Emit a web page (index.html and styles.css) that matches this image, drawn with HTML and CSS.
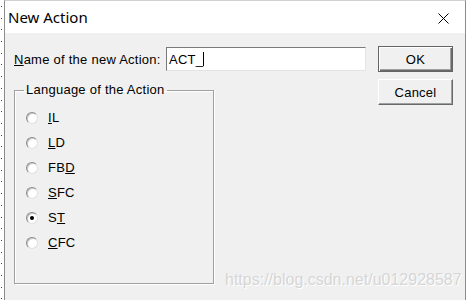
FILE: index.html
```html
<!DOCTYPE html>
<html>
<head>
<meta charset="utf-8">
<link rel="stylesheet" href="styles.css">
</head>
<body>
<div class="desk">
  <div class="window">
    <div class="titlebar">
      <span class="title">New Action</span>
      <svg class="close" width="11" height="11" viewBox="0 0 11 11"><path d="M0.5 0.5 L10.5 10.5 M10.5 0.5 L0.5 10.5" stroke="#000" stroke-width="1" fill="none"/></svg>
    </div>
    <div class="client">
      <div class="main">
        <div class="name-row">
          <label class="name-label"><u>N</u>ame of the new Action:</label>
          <div class="field">ACT_<span class="caret"></span></div>
        </div>
        <fieldset class="group">
          <legend>Language of the Action</legend>
          <div class="opt"><span class="radio"></span><span><u>I</u>L</span></div>
          <div class="opt"><span class="radio"></span><span><u>L</u>D</span></div>
          <div class="opt"><span class="radio"></span><span>FB<u>D</u></span></div>
          <div class="opt"><span class="radio"></span><span><u>S</u>FC</span></div>
          <div class="opt"><span class="radio checked"></span><span>S<u>T</u></span></div>
          <div class="opt"><span class="radio"></span><span><u>C</u>FC</span></div>
        </fieldset>
      </div>
      <div class="buttons">
        <button class="btn default">OK</button>
        <button class="btn">Cancel</button>
      </div>
    </div>
  </div>
  <div class="watermark">https://blog.csdn.net/u012928587</div>
</div>
</body>
</html>
```
FILE: styles.css
```css
html, body {
  margin: 0;
  padding: 0;
  background: #fff;
}
.desk {
  position: relative;
  width: 469px;
  height: 300px;
  overflow: hidden;
  background-color: #fff;
  background-image: linear-gradient(#3a3a3a, #3a3a3a);
  background-size: 1px 2px;
  background-position: 1px 5px;
  background-repeat: repeat-y;
  background-origin: border-box;
}
.desk {
  background-image: repeating-linear-gradient(to bottom, #444 0 1px, transparent 1px 11.7px);
  background-size: 1px 100%;
  background-position: 1px 6px;
  background-repeat: no-repeat;
}
.window {
  margin-left: 4px;
  width: 462px;
  height: 300px;
  box-sizing: border-box;
  border-left: 1px solid #8c8c8c;
  border-right: 1px solid #8c8c8c;
  border-top: 1px solid #d0d0d0;
  background: #f0f0f0;
  font-family: "Liberation Sans", Arial, sans-serif;
  font-size: 13px;
  letter-spacing: 0.25px;
  color: #000;
}
.titlebar {
  height: 32px;
  background: #fff;
  display: flex;
  align-items: center;
  justify-content: space-between;
  padding: 0 16px 0 3px;
}
.title {
  font-family: "Noto Sans", "Open Sans", sans-serif;
  font-size: 15px;
  letter-spacing: 0;
  margin-top: -1px;
}
.close {
  align-self: flex-start;
  margin-top: 12px;
}
.client {
  display: flex;
  padding: 13px 12px 0 9px;
}
.main {
  width: 352px;
}
.name-row {
  display: flex;
  align-items: center;
  margin-top: 1px;
  height: 24px;
}
.name-label {
  width: 152px;
  padding-top: 1px;
}
.field {
  width: 200px;
  height: 24px;
  box-sizing: border-box;
  background: #fff;
  border: 1px solid;
  border-color: #7a7a7a #e3e3e3 #e3e3e3 #7a7a7a;
  padding-left: 2px;
  display: flex;
  align-items: center;
}
.caret {
  display: inline-block;
  width: 1px;
  height: 14px;
  background: #000;
  margin-left: 0;
}
.group {
  margin: 12px 0 0 0;
  width: 200px;
  height: 201px;
  box-sizing: border-box;
  border: 1px solid #a0a0a0;
  box-shadow: inset 1px 1px 0 #fff, 1px 1px 0 #fff;
  padding: 8px 0 0 11px;
}
.group legend {
  padding: 0 2px;
  margin-left: -2px;
  line-height: 14px;
}
.opt {
  display: flex;
  align-items: center;
  height: 25px;
}
.radio {
  position: relative;
  width: 12px;
  height: 12px;
  box-sizing: border-box;
  border-radius: 50%;
  border: 1px solid;
  border-color: #8a8a8a #e0e0e0 #e0e0e0 #8a8a8a;
  background: #fff;
  box-shadow: inset 1px 1px 0 #c8c8c8;
  margin-right: 10px;
}
.radio.checked::after {
  content: "";
  position: absolute;
  left: 3px;
  top: 3px;
  width: 4px;
  height: 4px;
  border-radius: 50%;
  background: #000;
}
.buttons {
  margin-left: 12px;
  display: flex;
  flex-direction: column;
  gap: 7px;
}
.btn {
  width: 75px;
  height: 26px;
  box-sizing: border-box;
  font-family: "Liberation Sans", Arial, sans-serif;
  font-size: 13px;
  letter-spacing: 0.25px;
  color: #000;
  background: #f0f0f0;
  border: 1px solid;
  border-color: #fff #696969 #696969 #fff;
  box-shadow: inset -1px -1px 0 #a0a0a0;
  padding: 0;
}
.btn.default {
  border: 1px solid #646464;
  box-shadow: inset 1px 1px 0 #fff, inset -1px -1px 0 #696969, inset -2px -2px 0 #a0a0a0;
}
.watermark {
  position: absolute;
  left: 225px;
  top: 271px;
  font-family: "Liberation Sans", Arial, sans-serif;
  font-size: 16px;
  color: #d6d6d6;
  text-shadow: 1px 1px 0 #fff;
  white-space: nowrap;
}
```
